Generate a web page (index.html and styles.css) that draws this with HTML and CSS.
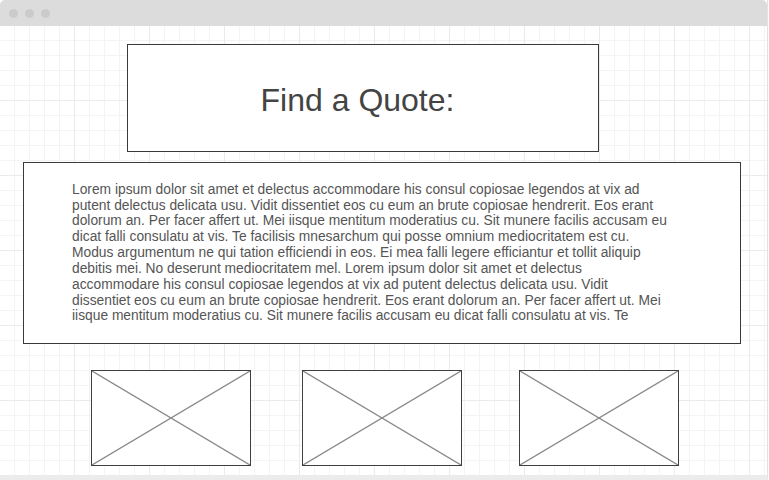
FILE: index.html
```html
<!DOCTYPE html>
<html>
<head>
<meta charset="utf-8">
<link rel="stylesheet" href="styles.css">
</head>
<body>
<div class="frame">
  <div class="topbar">
    <span class="dot"></span><span class="dot"></span><span class="dot"></span>
  </div>
  <div class="canvas">
    <div class="title-box"><h1 class="title">Find a Quote:</h1></div>
    <div class="text-box">
      <p class="lorem">Lorem ipsum dolor sit amet et delectus accommodare his consul copiosae legendos at vix ad<br>putent delectus delicata usu. Vidit dissentiet eos cu eum an brute copiosae hendrerit. Eos erant<br>dolorum an. Per facer affert ut. Mei iisque mentitum moderatius cu. Sit munere facilis accusam eu<br>dicat falli consulatu at vis. Te facilisis mnesarchum qui posse omnium mediocritatem est cu.<br>Modus argumentum ne qui tation efficiendi in eos. Ei mea falli legere efficiantur et tollit aliquip<br>debitis mei. No deserunt mediocritatem mel. Lorem ipsum dolor sit amet et delectus<br>accommodare his consul copiosae legendos at vix ad putent delectus delicata usu. Vidit<br>dissentiet eos cu eum an brute copiosae hendrerit. Eos erant dolorum an. Per facer affert ut. Mei<br>iisque mentitum moderatius cu. Sit munere facilis accusam eu dicat falli consulatu at vis. Te</p>
    </div>
    <div class="images">
      <div class="ph ph-1"><svg viewBox="0 0 100 100" preserveAspectRatio="none"><line x1="0" y1="0" x2="100" y2="100"/><line x1="100" y1="0" x2="0" y2="100"/></svg></div>
      <div class="ph ph-2"><svg viewBox="0 0 100 100" preserveAspectRatio="none"><line x1="0" y1="0" x2="100" y2="100"/><line x1="100" y1="0" x2="0" y2="100"/></svg></div>
      <div class="ph ph-3"><svg viewBox="0 0 100 100" preserveAspectRatio="none"><line x1="0" y1="0" x2="100" y2="100"/><line x1="100" y1="0" x2="0" y2="100"/></svg></div>
    </div>
  </div>
</div>
</body>
</html>
```

FILE: styles.css
```css
* { box-sizing: border-box; }
html, body { margin: 0; padding: 0; background: #fff; }
body { font-family: "Liberation Sans", Arial, sans-serif; }

.frame {
  width: 768px;
  height: 480px;
  border-right: 1px solid #e2e2e2;
  border-bottom: 4px solid #ececec;
  display: flex;
  flex-direction: column;
  overflow: hidden;
}

.topbar {
  height: 26px;
  flex: none;
  background: #dcdcdc;
  border-radius: 5px 5px 0 0;
  display: flex;
  align-items: center;
  padding-left: 9px;
  gap: 7px;
}
.dot {
  width: 9px;
  height: 9px;
  border-radius: 50%;
  background: #cbcbcb;
}

.canvas {
  flex: 1;
  background-color: #fff;
  background-image:
    linear-gradient(to right, transparent 74px, #ebebeb 74px),
    linear-gradient(to bottom, transparent 74px, #ebebeb 74px),
    linear-gradient(to right, transparent 14px, #f4f4f4 14px),
    linear-gradient(to bottom, transparent 14px, #f4f4f4 14px);
  background-size: 75px 75px, 75px 75px, 15px 15px, 15px 15px;
  padding-top: 18px;
}

.title-box {
  margin-left: 127px;
  width: 472px;
  height: 108px;
  border: 1px solid #3a3a3a;
  background: #fff;
  display: flex;
  align-items: center;
  justify-content: center;
  padding: 4px 11px 0 0;
}
.title {
  margin: 0;
  font-weight: normal;
  font-size: 32px;
  color: #444;
  line-height: 1;
}

.text-box {
  margin-top: 10px;
  margin-left: 23px;
  width: 718px;
  height: 182px;
  border: 1px solid #3a3a3a;
  background: #fff;
  display: flex;
  align-items: center;
  padding-left: 48px;
}
.lorem {
  margin: 0;
  font-size: 13.8px;
  line-height: 15.85px;
  color: #555;
  white-space: nowrap;
}

.images {
  margin-top: 26px;
  display: flex;
  padding-left: 91px;
}
.ph {
  width: 160px;
  height: 96px;
  border: 1px solid #3f3f3f;
  background: #fff;
}
.ph-2 { margin-left: 51px; }
.ph-3 { margin-left: 57px; }
.ph svg {
  display: block;
  width: 100%;
  height: 100%;
}
.ph line {
  stroke: #888;
  stroke-width: 1.3;
  vector-effect: non-scaling-stroke;
}
```
